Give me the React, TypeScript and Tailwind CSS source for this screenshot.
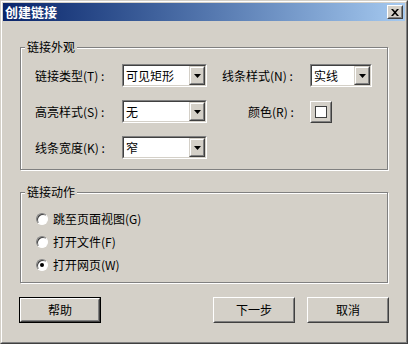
import type { ReactNode } from 'react';

const font = { fontFamily: '"Noto Sans CJK SC", "Liberation Sans", sans-serif' };

function Raised({ children, className = '' }: { children?: ReactNode; className?: string }) {
  return (
    <div className={`border border-t-white border-l-white border-r-[#404040] border-b-[#404040] ${className}`}>
      <div className="flex h-full w-full items-center justify-center border border-t-[#d4d0c8] border-l-[#d4d0c8] border-r-[#808080] border-b-[#808080] bg-[#d4d0c8]">
        {children}
      </div>
    </div>
  );
}

function Combo({ value, width }: { value: string; width: string }) {
  return (
    <div className={`flex h-[23px] ${width} border border-t-[#808080] border-l-[#808080] border-r-white border-b-white`}>
      <div className="flex flex-1 border border-t-[#404040] border-l-[#404040] border-r-[#d4d0c8] border-b-[#d4d0c8] bg-white">
        <span className="flex-1 pl-[2px] text-[12px] leading-[19px] text-black">{value}</span>
        <div className="h-[19px] w-[16px] border border-t-[#d4d0c8] border-l-[#d4d0c8] border-r-[#404040] border-b-[#404040]">
          <div className="flex h-full w-full items-center justify-center border border-t-white border-l-white border-r-[#808080] border-b-[#808080] bg-[#d4d0c8]">
            <svg width="7" height="4" viewBox="0 0 7 4">
              <polygon points="0,0 7,0 3.5,4" fill="#000" />
            </svg>
          </div>
        </div>
      </div>
    </div>
  );
}

function Group({ title, className, children }: { title: string; className: string; children: ReactNode }) {
  return (
    <div className={`relative w-[368px] border border-[#808080] shadow-[inset_1px_1px_0_#fff,1px_1px_0_#fff] ${className}`}>
      <span className="absolute left-[4px] top-[-9px] bg-[#d4d0c8] px-[2px] text-[12px] leading-[16px] text-black">
        {title}
      </span>
      {children}
    </div>
  );
}

function Radio({ label, checked }: { label: string; checked?: boolean }) {
  return (
    <div className="flex h-[23px] items-center">
      <div className="ml-[14px] flex h-[12px] w-[12px] items-center justify-center rounded-full border border-t-[#808080] border-l-[#808080] border-r-white border-b-white bg-white shadow-[inset_1px_1px_0_#404040]">
        {checked ? <div className="h-[4px] w-[4px] rounded-full bg-black" /> : null}
      </div>
      <span className="ml-[5px] text-[12px] text-black">{label}</span>
    </div>
  );
}

export default function App() {
  return (
    <div style={font} className="h-[344px] w-[408px] border border-t-[#d4d0c8] border-l-[#d4d0c8] border-r-[#404040] border-b-[#404040] bg-[#d4d0c8]">
      <div className="flex h-full flex-col border border-t-white border-l-white border-r-[#808080] border-b-[#808080] p-px">
        <div className="flex h-[18px] items-center justify-between bg-linear-to-r from-[#0a246a] to-[#a6caf0] pl-[2px] pr-[2px]">
          <span className="text-[13px] font-bold leading-[18px] text-white">创建链接</span>
          <Raised className="h-[14px] w-[16px]">
            <svg width="8" height="7" viewBox="0 0 8 7">
              <path d="M0 0 L2 0 L4 2.2 L6 0 L8 0 L5 3.5 L8 7 L6 7 L4 4.8 L2 7 L0 7 L3 3.5 Z" fill="#000" />
            </svg>
          </Raised>
        </div>

        <div className="flex flex-col pl-[17px]">
          <Group title="链接外观" className="mt-[26px] h-[123px]">
            <div className="flex flex-col gap-[13px] pl-[14px] pt-[16px]">
              <div className="flex items-center">
                <span className="w-[87px] text-[12px] text-black">链接类型(T) :</span>
                <Combo value="可见矩形" width="w-[85px]" />
                <span className="ml-[15px] w-[88px] text-[12px] text-black">线条样式(N) :</span>
                <Combo value="实线" width="w-[62px]" />
              </div>
              <div className="flex items-center">
                <span className="w-[87px] text-[12px] text-black">高亮样式(S) :</span>
                <Combo value="无" width="w-[85px]" />
                <span className="ml-[41px] w-[62px] text-[12px] text-black">颜色(R) :</span>
                <Raised className="h-[22px] w-[22px]">
                  <div className="h-[12px] w-[12px] border border-[#404040] bg-white" />
                </Raised>
              </div>
              <div className="flex items-center">
                <span className="w-[87px] text-[12px] text-black">线条宽度(K) :</span>
                <Combo value="窄" width="w-[85px]" />
              </div>
            </div>
          </Group>

          <Group title="链接动作" className="mt-[22px] h-[91px]">
            <div className="flex flex-col pl-[1px] pt-[14px]">
              <Radio label="跳至页面视图(G)" />
              <Radio label="打开文件(F)" />
              <Radio label="打开网页(W)" checked />
            </div>
          </Group>
        </div>

        <div className="mt-[14px] flex pl-[16px]">
          <div className="h-[26px] w-[82px] border border-black">
            <Raised className="h-full w-full">
              <span className="text-[12px] text-black">帮助</span>
            </Raised>
          </div>
          <Raised className="ml-[112px] h-[26px] w-[82px]">
            <span className="text-[12px] text-black">下一步</span>
          </Raised>
          <Raised className="ml-[12px] h-[26px] w-[82px]">
            <span className="text-[12px] text-black">取消</span>
          </Raised>
        </div>
      </div>
    </div>
  );
}
